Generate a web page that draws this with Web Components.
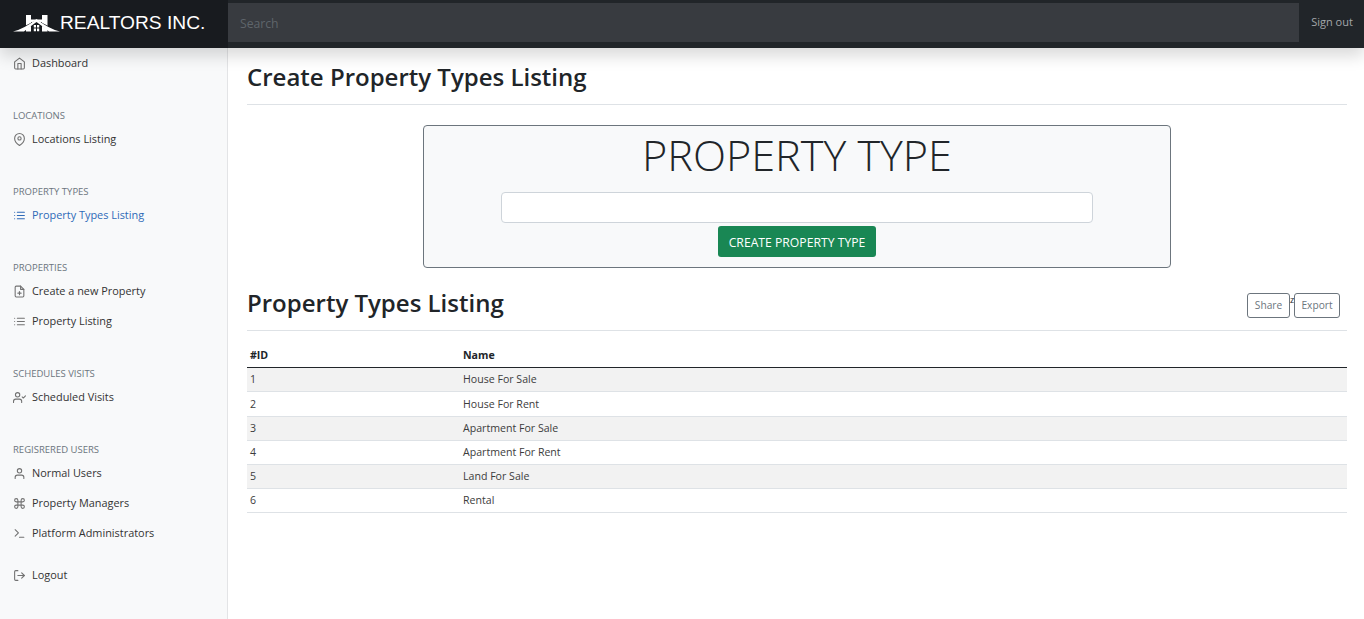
<!DOCTYPE html>
<html lang="en">
<head>
<meta charset="utf-8">
<title>Realtors Inc.</title>
<style>
  html, body { margin: 0; height: 100%; overflow: hidden; background: #fff; }
  body { font-family: "Open Sans", "Noto Sans", "Liberation Sans", sans-serif; color: #212529; }
</style>
</head>
<body>
<realtors-app>
  <top-bar slot="top"></top-bar>
  <side-bar slot="side">
    <nav-link icon="home">Dashboard</nav-link>
    <nav-group label="Locations">
      <nav-link icon="pin">Locations Listing</nav-link>
    </nav-group>
    <nav-group label="Property Types">
      <nav-link icon="list" active>Property Types Listing</nav-link>
    </nav-group>
    <nav-group label="Properties">
      <nav-link icon="file">Create a new Property</nav-link>
      <nav-link icon="list">Property Listing</nav-link>
    </nav-group>
    <nav-group label="Schedules Visits">
      <nav-link icon="usercheck">Scheduled Visits</nav-link>
    </nav-group>
    <nav-group label="Regisrered Users">
      <nav-link icon="user">Normal Users</nav-link>
      <nav-link icon="command">Property Managers</nav-link>
      <nav-link icon="terminal">Platform Administrators</nav-link>
    </nav-group>
    <nav-link icon="logout" class="logout">Logout</nav-link>
  </side-bar>
  <page-heading>Create Property Types Listing</page-heading>
  <type-form></type-form>
  <page-heading tools>Property Types Listing</page-heading>
  <types-table></types-table>
</realtors-app>

<script>
// icones (feather), 24x24
const ICONS = {
  home: '<path d="M3 9l9-7 9 7v11a2 2 0 0 1-2 2H5a2 2 0 0 1-2-2z"/><polyline points="9 22 9 12 15 12 15 22"/>',
  pin: '<path d="M21 10c0 7-9 13-9 13s-9-6-9-13a9 9 0 0 1 18 0z"/><circle cx="12" cy="10" r="3"/>',
  list: '<line x1="8" y1="6" x2="21" y2="6"/><line x1="8" y1="12" x2="21" y2="12"/><line x1="8" y1="18" x2="21" y2="18"/><line x1="3" y1="6" x2="3.01" y2="6"/><line x1="3" y1="12" x2="3.01" y2="12"/><line x1="3" y1="18" x2="3.01" y2="18"/>',
  file: '<path d="M14 2H6a2 2 0 0 0-2 2v16a2 2 0 0 0 2 2h12a2 2 0 0 0 2-2V8z"/><polyline points="14 2 14 8 20 8"/><line x1="12" y1="18" x2="12" y2="12"/><line x1="9" y1="15" x2="15" y2="15"/>',
  usercheck: '<path d="M16 21v-2a4 4 0 0 0-4-4H5a4 4 0 0 0-4 4v2"/><circle cx="8.5" cy="7" r="4"/><polyline points="17 11 19 13 23 9"/>',
  user: '<path d="M20 21v-2a4 4 0 0 0-4-4H8a4 4 0 0 0-4 4v2"/><circle cx="12" cy="7" r="4"/>',
  command: '<path d="M18 3a3 3 0 0 0-3 3v12a3 3 0 0 0 3 3 3 3 0 0 0 3-3 3 3 0 0 0-3-3H6a3 3 0 0 0-3 3 3 3 0 0 0 3 3 3 3 0 0 0 3-3V6a3 3 0 0 0-3-3 3 3 0 0 0-3 3 3 3 0 0 0 3 3h12a3 3 0 0 0 3-3 3 3 0 0 0-3-3z"/>',
  terminal: '<polyline points="4 17 10 11 4 5"/><line x1="12" y1="19" x2="20" y2="19"/>',
  logout: '<path d="M9 21H5a2 2 0 0 1-2-2V5a2 2 0 0 1 2-2h4"/><polyline points="16 17 21 12 16 7"/><line x1="21" y1="12" x2="9" y2="12"/>'
};

class RealtorsApp extends HTMLElement {
  constructor() {
    super();
    this.attachShadow({ mode: 'open' }).innerHTML = `
      <style>
        :host { display: grid; grid-template-columns: 228px 1fr; grid-template-rows: 48px 1fr; height: 100vh; }
        .top { grid-column: 1 / 3; position: relative; z-index: 2; }
        .main { padding: 0 17px 0 19px; min-width: 0; }
      </style>
      <div class="top"><slot name="top"></slot></div>
      <slot name="side"></slot>
      <div class="main"><slot></slot></div>
    `;
  }
}

class TopBar extends HTMLElement {
  constructor() {
    super();
    this.attachShadow({ mode: 'open' }).innerHTML = `
      <style>
        :host { display: flex; height: 48px; background: #212529; box-shadow: 0 8px 16px rgba(0,0,0,.15); }
        .brand { width: 228px; flex: none; background: #181b1f; display: flex; align-items: center; padding-left: 13px; box-sizing: border-box; }
        .brand svg { width: 47px; height: 20px; flex: none; }
        .brand span { font: 19.2px/24px "Liberation Sans", Arial, sans-serif; color: #fff; white-space: nowrap; padding-bottom: 2px; }
        .search { flex: 1; margin: 3px 0 6px; background: #383b40; color: #5f656b; font-size: 12.2px; line-height: 41px; padding-left: 12px; }
        .out { width: 65px; flex: none; color: #a4a7aa; font-size: 11px; line-height: 44px; text-align: center; padding-left: 1px; box-sizing: border-box; }
      </style>
      <div class="brand">
        <svg viewBox="0 0 47 20" aria-hidden="true">
          <path fill="#fff" d="M13 1h5v16.5h-5zM29 1h5.5v16.5H29zM18 5.5h11V8H18z"/>
          <path fill="none" stroke="#181b1f" stroke-width="2.6" d="M2 18.5 L23.5 7.5 L45 18.5"/>
          <path fill="#fff" d="M0 17.5 Q11 15 23.5 5 Q36 15 47 17.5 L36 17.5 Q30 12.5 23.5 8 Q17 12.5 11 17.5z"/>
          <path fill="#fff" d="M20.8 11h2.2v2.6h-2.2zM24 11h2.2v2.6H24zM20.8 14.4h2.2v2.8h-2.2zM24 14.4h2.2v2.8H24z"/>
        </svg>
        <span>REALTORS INC.</span>
      </div>
      <div class="search">Search</div>
      <div class="out">Sign out</div>
    `;
  }
}

class SideBar extends HTMLElement {
  constructor() {
    super();
    this.attachShadow({ mode: 'open' }).innerHTML = `
      <style>
        :host { display: block; background: #f8f9fa; border-right: 1px solid #e3e4e6; box-sizing: border-box; overflow: hidden; }
        ::slotted(.logout) { margin-top: 12px; }
      </style>
      <slot></slot>
    `;
  }
}

class NavGroup extends HTMLElement {
  constructor() {
    super();
    const root = this.attachShadow({ mode: 'open' });
    root.innerHTML = `
      <style>
        :host { display: block; margin-top: 28px; }
        .label { height: 18px; line-height: 20px; padding-left: 13px; font-size: 9.5px; color: #6c757d; text-transform: uppercase; white-space: nowrap; }
      </style>
      <div class="label"></div>
      <slot></slot>
    `;
    root.querySelector('.label').textContent = this.getAttribute('label');
  }
}

class NavLink extends HTMLElement {
  constructor() {
    super();
    const active = this.hasAttribute('active');
    this.attachShadow({ mode: 'open' }).innerHTML = `
      <style>
        :host { display: flex; align-items: center; height: 30px; padding-left: 13px; font-size: 10.9px; font-weight: 500; color: ${active ? '#2e6ab8' : '#333'}; white-space: nowrap; }
        svg { width: 13px; height: 13px; margin-right: 6px; flex: none; fill: none; stroke: ${active ? '#2e6ab8' : '#727272'}; stroke-width: 2; stroke-linecap: round; stroke-linejoin: round; }
        span { padding-bottom: 1px; }
      </style>
      <svg viewBox="0 0 24 24">${ICONS[this.getAttribute('icon')]}</svg><span><slot></slot></span>
    `;
  }
}

class PageHeading extends HTMLElement {
  constructor() {
    super();
    const tools = this.hasAttribute('tools') ? `
      <div class="tools"><button class="share">Share</button><i>z</i><button class="export">Export</button></div>` : '';
    this.attachShadow({ mode: 'open' }).innerHTML = `
      <style>
        :host { display: flex; align-items: center; justify-content: space-between; height: 54px; padding-top: 2px; border-bottom: 1px solid #dee2e6; box-sizing: content-box; }
        h2 { margin: 0; font-size: 24px; line-height: 54px; font-weight: 600; color: #212529; white-space: nowrap; }
        .tools { display: flex; align-items: flex-start; margin-right: 7px; margin-top: 5px; }
        button { font: 10.2px "Open Sans", sans-serif; color: #6c757d; background: #fff; border: 1px solid #6c757d; border-radius: 3px; height: 25px; padding: 0 0 1px; box-sizing: border-box; }
        .share { width: 43px; }
        .export { width: 46px; }
        i { font: normal 500 9px/10px "Open Sans", sans-serif; color: #212529; width: 4px; text-align: center; margin-top: 2px; }
      </style>
      <h2><slot></slot></h2>${tools}
    `;
  }
}

class TypeForm extends HTMLElement {
  constructor() {
    super();
    this.attachShadow({ mode: 'open' }).innerHTML = `
      <style>
        :host { display: flex; flex-direction: column; align-items: center; box-sizing: border-box; width: 748px; height: 143px; margin: 20px auto 6px; background: #f8f9fa; border: 1px solid #6c757d; border-radius: 4px; }
        h1 { margin: 0; font-size: 43.2px; line-height: 58px; font-weight: 300; color: #212529; white-space: nowrap; }
        .field { width: 592px; height: 31px; margin: 8px 0 3px; box-sizing: border-box; background: #fff; border: 1px solid #ced4da; border-radius: 4px; }
        button { width: 158px; height: 31px; font: 12.2px/33px "Open Sans", sans-serif; color: #fff; background: #198754; border: 0; border-radius: 3px; padding: 0; }
      </style>
      <h1>PROPERTY TYPE</h1>
      <input class="field" type="text">
      <button>CREATE PROPERTY TYPE</button>
    `;
  }
}

class TypesTable extends HTMLElement {
  constructor() {
    super();
    const rows = ['House For Sale', 'House For Rent', 'Apartment For Sale', 'Apartment For Rent', 'Land For Sale', 'Rental'];
    this.attachShadow({ mode: 'open' }).innerHTML = `
      <style>
        :host { display: block; margin-top: 12px; }
        .row { display: grid; grid-template-columns: 213px 1fr; height: 24px; line-height: 22px; box-sizing: border-box; border-bottom: 1px solid #dee2e6; font-size: 10.6px; color: #3c3c3c; padding-left: 3px; white-space: nowrap; }
        .row:nth-child(odd) { background: #f2f2f2; }
        .row:nth-child(4) { height: 25px; line-height: 24px; }
        .head { height: 25px; line-height: 24px; border-bottom: 1px solid #212529; font-weight: 700; color: #212529; }
      </style>
      <div class="row head"><span>#ID</span><span>Name</span></div>
      ${rows.map((name, i) => `<div class="row"><span>${i + 1}</span><span>${name}</span></div>`).join('')}
    `;
  }
}

customElements.define('realtors-app', RealtorsApp);
customElements.define('top-bar', TopBar);
customElements.define('side-bar', SideBar);
customElements.define('nav-group', NavGroup);
customElements.define('nav-link', NavLink);
customElements.define('page-heading', PageHeading);
customElements.define('type-form', TypeForm);
customElements.define('types-table', TypesTable);
</script>
</body>
</html>
